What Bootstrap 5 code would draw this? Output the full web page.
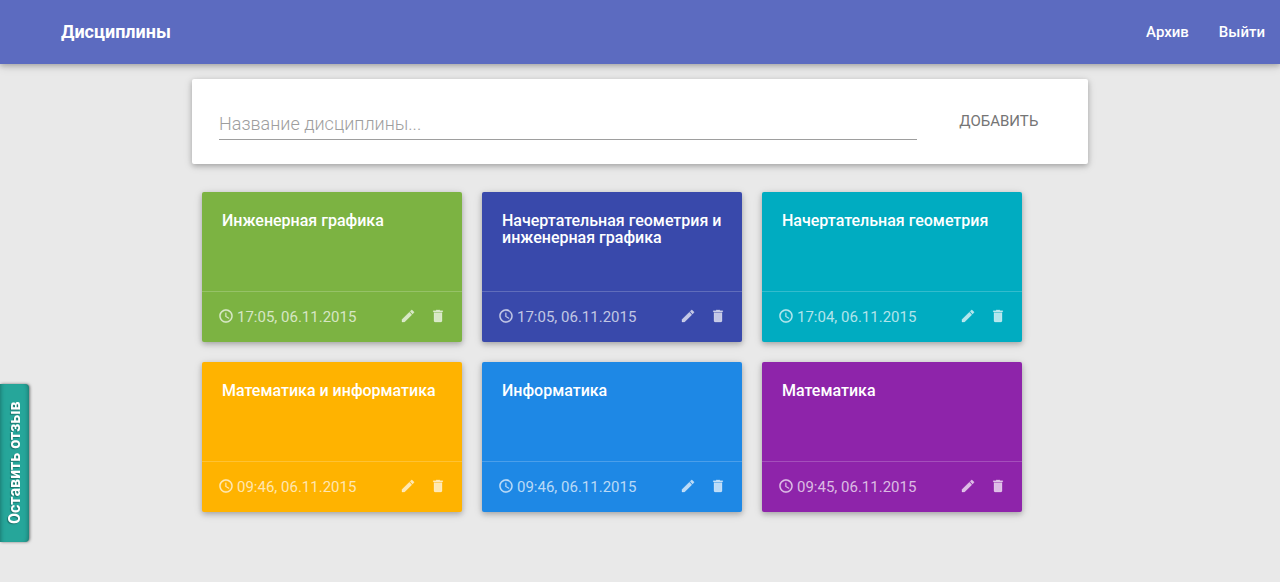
<!DOCTYPE html>
<html lang="ru">
<head>
<meta charset="utf-8">
<meta name="viewport" content="width=device-width, initial-scale=1">
<title>Дисциплины</title>
<link rel="stylesheet" href="https://cdn.jsdelivr.net/npm/bootstrap@5.3.0/dist/css/bootstrap.min.css">
<style>
  :root { --raised: 0 2px 5px rgba(0,0,0,.2), 0 2px 10px rgba(0,0,0,.14); }
  body { background: #e9e9e9; font-family: Roboto, "Liberation Sans", sans-serif; font-size: 15px; }
  .topbar { background: #5c6bc0; min-height: 64px; box-shadow: var(--raised); padding: 0 15px 0 61px; }
  .topbar .navbar-brand { font-size: 18px; line-height: 24px; font-weight: 700; }
  .topbar .navbar-nav { gap: 30px; }
  .topbar .nav-link { font-weight: 500; color: #fff; }
  .page { width: 70%; margin: 15px auto 0; }
  .panel { border-radius: 2px; box-shadow: var(--raised); padding: 27px 27px 24px; }
  .title-input { border: 0; border-bottom: 1px solid #9e9e9e; border-radius: 0; background: none; box-shadow: none;
    padding: 2px 0 0; height: 34px; font-size: 18px; line-height: 27px; font-weight: 300; color: #444; }
  .title-input:focus { border-color: #5c6bc0; box-shadow: none; background: none; }
  .title-input::placeholder { color: #9e9e9e; opacity: 1; }
  .btn-add { color: #757575; font-size: 15px; line-height: 30px; padding: 0; border: 0; }
  .tiles { gap: 20px; margin: 28px 0 20px; padding: 0 10px; }
  .tile { width: 260px; min-height: 150px; border: 0; border-radius: 2px; color: #fff; box-shadow: var(--raised); }
  .tile .card-body { padding: 20px; }
  .tile h2 { font-size: 16px; line-height: 17px; font-weight: 500; margin: 0; }
  .tile .card-footer { height: 51px; padding: 0 16px 2px; background: none; border-top: 1px solid rgba(255,255,255,.2); color: rgba(255,255,255,.7); }
  .tile .btn { color: inherit; padding: 0; border: 0; line-height: 0; }
  .tile .btn + .btn { margin-left: 14px; }
  .tile svg { width: 16px; height: 16px; fill: currentColor; }
  .tile time { margin: 0 auto 0 3px; padding-top: 2px; }
  .green { background: #7cb342; } .indigo-dark { background: #3949ab; } .aqua { background: #00acc1; }
  .amber { background: #ffb300; } .azure { background: #1e88e5; } .violet { background: #8e24aa; }
  .feedback { bottom: 40px; left: 0; width: 29px; height: 158px; padding: 0; border: 0; border-radius: 4px 0 0 4px;
    background: #26a69a; color: #fff; font: 700 16px/30px Roboto, "Liberation Sans", sans-serif; writing-mode: vertical-rl;
    transform: rotate(180deg); box-shadow: -1px 0 3px rgba(0,0,0,.5), inset 5px 0 5px -5px rgba(0,0,0,.4), inset -5px 0 5px -5px rgba(0,0,0,.4); text-shadow: -1px -1px 1px rgba(0,0,0,.3); }
</style>
</head>
<body>
<svg class="d-none" aria-hidden="true">
  <symbol id="clock" viewBox="0 0 24 24"><path d="M11.99 2C6.47 2 2 6.48 2 12s4.47 10 9.99 10C17.52 22 22 17.52 22 12S17.52 2 11.99 2zM12 20c-4.42 0-8-3.58-8-8s3.58-8 8-8 8 3.58 8 8-3.58 8-8 8zm.5-13H11v6l5.25 3.15.75-1.23-4.5-2.67z" stroke="currentColor" stroke-width=".3"/></symbol>
  <symbol id="pencil" viewBox="0 0 24 24"><path d="M3 17.25V21h3.75L17.81 9.94l-3.75-3.75L3 17.25zM20.71 7.04c.39-.39.39-1.02 0-1.41l-2.34-2.34a1 1 0 0 0-1.41 0l-1.83 1.83 3.75 3.75 1.83-1.83z" stroke="currentColor" stroke-width=".5"/></symbol>
  <symbol id="trash" viewBox="0 0 24 24"><path d="M6 19c0 1.1.9 2 2 2h8c1.1 0 2-.9 2-2V7H6v12zM19 4h-3.5l-1-1h-5l-1 1H5v2h14V4z" stroke="currentColor" stroke-width=".5"/></symbol>
</svg>

<nav class="navbar navbar-expand navbar-dark topbar">
  <a class="navbar-brand p-0 m-0 text-white" href="#">Дисциплины</a>
  <div class="navbar-nav ms-auto">
    <a class="nav-link p-0" href="#">Архив</a>
    <a class="nav-link p-0" href="#">Выйти</a>
  </div>
</nav>

<main class="page">
  <form class="panel bg-white">
    <div class="row g-0 align-items-start">
      <div class="col-10 pe-1">
        <input class="form-control title-input" id="title" type="text" aria-label="Название дисциплины" placeholder="Название дисциплины...">
      </div>
      <div class="col-2 ps-3 text-center"><button class="btn btn-add" type="submit">ДОБАВИТЬ</button></div>
    </div>
  </form>

  <section class="tiles d-flex flex-wrap">
    <article class="card tile green">
      <div class="card-body"><h2>Инженерная графика</h2></div>
      <div class="card-footer d-flex align-items-center">
        <svg><use href="#clock"/></svg><time>17:05, 06.11.2015</time>
        <button class="btn" type="button" aria-label="Изменить"><svg><use href="#pencil"/></svg></button>
        <button class="btn" type="button" aria-label="Удалить"><svg><use href="#trash"/></svg></button>
      </div>
    </article>
    <article class="card tile indigo-dark">
      <div class="card-body"><h2>Начертательная геометрия и инженерная графика</h2></div>
      <div class="card-footer d-flex align-items-center">
        <svg><use href="#clock"/></svg><time>17:05, 06.11.2015</time>
        <button class="btn" type="button" aria-label="Изменить"><svg><use href="#pencil"/></svg></button>
        <button class="btn" type="button" aria-label="Удалить"><svg><use href="#trash"/></svg></button>
      </div>
    </article>
    <article class="card tile aqua">
      <div class="card-body"><h2>Начертательная геометрия</h2></div>
      <div class="card-footer d-flex align-items-center">
        <svg><use href="#clock"/></svg><time>17:04, 06.11.2015</time>
        <button class="btn" type="button" aria-label="Изменить"><svg><use href="#pencil"/></svg></button>
        <button class="btn" type="button" aria-label="Удалить"><svg><use href="#trash"/></svg></button>
      </div>
    </article>
    <article class="card tile amber">
      <div class="card-body"><h2>Математика и информатика</h2></div>
      <div class="card-footer d-flex align-items-center">
        <svg><use href="#clock"/></svg><time>09:46, 06.11.2015</time>
        <button class="btn" type="button" aria-label="Изменить"><svg><use href="#pencil"/></svg></button>
        <button class="btn" type="button" aria-label="Удалить"><svg><use href="#trash"/></svg></button>
      </div>
    </article>
    <article class="card tile azure">
      <div class="card-body"><h2>Информатика</h2></div>
      <div class="card-footer d-flex align-items-center">
        <svg><use href="#clock"/></svg><time>09:46, 06.11.2015</time>
        <button class="btn" type="button" aria-label="Изменить"><svg><use href="#pencil"/></svg></button>
        <button class="btn" type="button" aria-label="Удалить"><svg><use href="#trash"/></svg></button>
      </div>
    </article>
    <article class="card tile violet">
      <div class="card-body"><h2>Математика</h2></div>
      <div class="card-footer d-flex align-items-center">
        <svg><use href="#clock"/></svg><time>09:45, 06.11.2015</time>
        <button class="btn" type="button" aria-label="Изменить"><svg><use href="#pencil"/></svg></button>
        <button class="btn" type="button" aria-label="Удалить"><svg><use href="#trash"/></svg></button>
      </div>
    </article>
  </section>
</main>

<button class="feedback position-fixed" type="button">Оставить отзыв</button>
<script src="https://cdn.jsdelivr.net/npm/bootstrap@5.3.0/dist/js/bootstrap.bundle.min.js"></script>
</body>
</html>
